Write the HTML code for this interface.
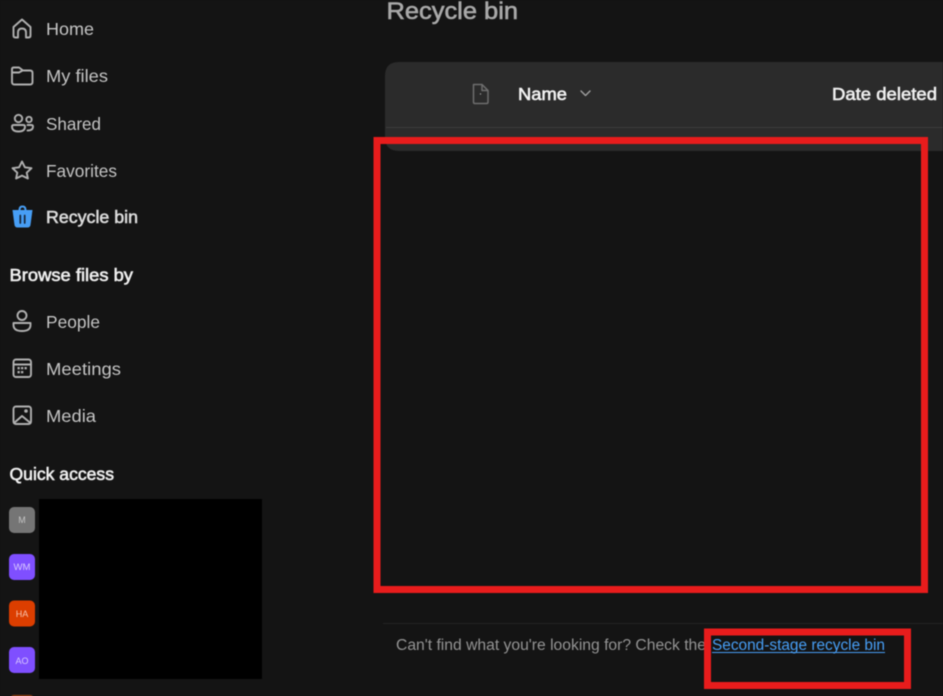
<!DOCTYPE html>
<html>
<head>
<meta charset="utf-8">
<style>
html,body{margin:0;padding:0;background:#141414;width:943px;height:696px;overflow:hidden}
svg{display:block;filter:blur(0.4px)}
text{font-family:"Liberation Sans",sans-serif}
.sb{stroke-width:.6px;stroke:currentColor}
</style>
</head>
<body>
<svg width="943" height="696" viewBox="0 0 943 696" xmlns="http://www.w3.org/2000/svg">
<rect width="943" height="696" fill="#141414"/>

<!-- Nav text -->
<g font-size="17.500" fill="#c4c4c4">
<text x="46" y="35" textLength="48" lengthAdjust="spacingAndGlyphs">Home</text>
<text x="46" y="82" textLength="62" lengthAdjust="spacingAndGlyphs">My files</text>
<text x="46" y="130" textLength="55" lengthAdjust="spacingAndGlyphs">Shared</text>
<text x="46" y="177" textLength="71" lengthAdjust="spacingAndGlyphs">Favorites</text>
<text x="46" y="223" class="sb" style="color:#dcdcdc" fill="#dcdcdc" textLength="92" lengthAdjust="spacingAndGlyphs">Recycle bin</text>
<text x="46" y="328" textLength="54" lengthAdjust="spacingAndGlyphs">People</text>
<text x="46" y="375" textLength="75" lengthAdjust="spacingAndGlyphs">Meetings</text>
<text x="46" y="422" textLength="50" lengthAdjust="spacingAndGlyphs">Media</text>
</g>
<g font-size="17.500" class="sb" style="color:#f0f0f0" fill="#f0f0f0">
<text x="9.500" y="281" textLength="123.500" lengthAdjust="spacingAndGlyphs">Browse files by</text>
<text x="9.500" y="480" textLength="104.500" lengthAdjust="spacingAndGlyphs">Quick access</text>
</g>

<!-- Nav icons -->
<g fill="none" stroke="#b0b0b0" stroke-width="1.900" stroke-linejoin="round" stroke-linecap="round">
<path d="M13.500 27 L22 19.500 L30.500 27 V35.500 Q30.500 37.500 28.500 37.500 H26 V32.500 Q26 28.500 22 28.500 Q18 28.500 18 32.500 V37.500 H15.500 Q13.500 37.500 13.500 35.500 Z"/>
<path d="M12 69 Q12 67.500 14 67.500 H19 L23 70.500 H30 Q32.500 70.500 32.500 73 V82 Q32.500 84.500 30 84.500 H14.500 Q12 84.500 12 82 Z M12 72.500 H19 L22.500 70.500"/>
<circle cx="18.500" cy="118.500" r="3.700"/>
<path d="M12 126.500 Q12 125 14 125 H23 Q25 125 25 126.500 Q25 131.500 18.500 131.500 Q12 131.500 12 126.500 Z"/>
<circle cx="29" cy="119.500" r="2.700"/>
<path d="M27.500 125 H31 Q33 125 33 126.500 Q33 130.500 27.500 130.500"/>
<path d="M22 161.500 L24.900 167.300 L31.500 168.200 L26.700 172.700 L27.900 178.500 L22 175.600 L16.100 178.500 L17.300 172.700 L12.500 168.200 L19.100 167.300 Z"/>
<circle cx="22" cy="315.500" r="4.500"/>
<path d="M13.500 323 H30.500 V325 Q30.500 331 22 331 Q13.500 331 13.500 325 Z"/>
<rect x="13.500" y="359.500" width="17.500" height="17.500" rx="2.500"/>
<path d="M13.500 364.500 H31"/>
<rect x="13.500" y="406.500" width="17.500" height="17.500" rx="2.500"/>
<path d="M14 423 L22 416 L30.500 423"/>
</g>
<circle cx="26" cy="411" r="1.800" fill="#b0b0b0"/>
<g fill="#b0b0b0">
<rect x="17.500" y="367" width="2.300" height="2.300"/><rect x="21" y="367" width="2.300" height="2.300"/><rect x="24.500" y="367" width="2.300" height="2.300"/>
<rect x="17.500" y="371" width="2.300" height="2.300"/><rect x="21" y="371" width="2.300" height="2.300"/>
</g>

<!-- Recycle bin icon -->
<path d="M12.500 210 H32.500 L30.500 225 Q30 227.500 27.500 227.500 H17.500 Q15 227.500 14.500 225 Z" fill="#479ef5"/>
<path d="M19.500 210 Q19.500 206.500 22.500 206.500 Q25.500 206.500 25.500 210" fill="none" stroke="#479ef5" stroke-width="2"/>
<path d="M20.300 215.500 V223 M24.700 215.500 V223" stroke="#16263a" stroke-width="1.700" stroke-linecap="round"/>

<!-- Quick access avatars -->
<g font-size="9" text-anchor="middle">
<rect x="9" y="507" width="26" height="26" rx="5" fill="#757575"/>
<text x="22" y="523" fill="#c4c4c4">M</text>
<rect x="9" y="554" width="26" height="26" rx="5" fill="#7f4fff"/>
<text x="22" y="570" fill="#d8c8ff" textLength="17" lengthAdjust="spacingAndGlyphs">WM</text>
<rect x="9" y="600.500" width="26" height="26" rx="5" fill="#dc3e00"/>
<text x="22" y="617" fill="#f7c4ae">HA</text>
<rect x="9" y="647" width="26" height="26" rx="5" fill="#7f4fff"/>
<text x="22" y="664" fill="#d8c8ff">AO</text>
<rect x="9" y="695" width="26" height="26" rx="5" fill="#b04a10"/>
</g>
<rect x="39" y="499" width="223" height="180" fill="#000"/>

<!-- Title -->
<text x="386.500" y="19" font-size="24" class="sb" style="color:#a9a9a9" fill="#a9a9a9" textLength="131.500" lengthAdjust="spacingAndGlyphs">Recycle bin</text>

<!-- Table header -->
<path d="M943 62 H399 Q385 62 385 76 V137 Q385 151 399 151 H943 Z" fill="#2b2b2b"/>
<rect x="386" y="127" width="557" height="1" fill="#3d3d3d"/>
<path d="M473.500 84.500 H482 L488 90.500 V102 Q488 103.500 486.500 103.500 H475 Q473.500 103.500 473.500 102 Z M482 84.500 V90.500 H488" fill="none" stroke="#6e6e6e" stroke-width="1.500" stroke-linejoin="round"/>
<circle cx="480.500" cy="94" r="0.700" fill="#a0a0a0"/>
<text x="518" y="100" font-size="17.500" class="sb" style="color:#f4f4f4" fill="#f4f4f4" textLength="49" lengthAdjust="spacingAndGlyphs">Name</text>
<path d="M581 91 L585.500 95.500 L590 91" fill="none" stroke="#a0a0a0" stroke-width="1.400" stroke-linecap="round" stroke-linejoin="round"/>
<text x="832" y="100" font-size="17.500" class="sb" style="color:#f0f0f0" fill="#f0f0f0" textLength="105" lengthAdjust="spacingAndGlyphs">Date deleted</text>

<!-- Footer -->
<rect x="383" y="623" width="560" height="1" fill="#232323"/>
<text x="396" y="650" font-size="15.500" fill="#949494" textLength="310" lengthAdjust="spacingAndGlyphs">Can't find what you're looking for? Check the</text>
<text x="712" y="650" font-size="15.500" fill="#479ef5" textLength="173" lengthAdjust="spacingAndGlyphs">Second-stage recycle bin</text>
<rect x="712" y="652" width="173" height="1" fill="#479ef5"/>

<!-- Red annotations -->
<rect x="377" y="140.500" width="547.500" height="449" fill="none" stroke="#e81c1c" stroke-width="7"/>
<rect x="707.500" y="632" width="200" height="53.500" fill="none" stroke="#e81c1c" stroke-width="7"/>
</svg>
</body>
</html>
